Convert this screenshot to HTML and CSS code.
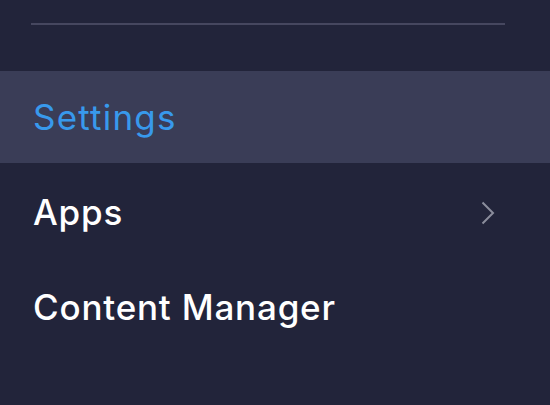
FILE: index.html
```html
<!DOCTYPE html>
<html>
<head>
<meta charset="utf-8">
<link rel="stylesheet" href="styles.css">
</head>
<body>
<nav class="menu">
  <div class="divider-wrap"><div class="divider"></div></div>
  <ul class="items">
    <li class="item active"><span class="label">Settings</span></li>
    <li class="item"><span class="label">Apps</span>
      <svg class="chev" width="14" height="24" viewBox="0 0 14 24"><path d="M1.5 1.5 L12 12 L1.5 22.5" fill="none" stroke="#8b8d9c" stroke-width="2"/></svg>
    </li>
    <li class="item"><span class="label">Content Manager</span></li>
  </ul>
</nav>
</body>
</html>
```
FILE: styles.css
```css
html, body {
  margin: 0;
  padding: 0;
  width: 550px;
  height: 405px;
  background: #22243a;
  overflow: hidden;
}
.menu {
  font-family: Inter, "Noto Sans", sans-serif;
}
.divider-wrap {
  padding: 23px 45px 0 31px;
  height: 71px;
  box-sizing: border-box;
}
.divider {
  height: 2px;
  background: #46475f;
}
.items {
  list-style: none;
  margin: 0;
  padding: 0;
}
.item {
  height: 95px;
  box-sizing: border-box;
  padding: 4px 55px 0 33px;
  display: flex;
  align-items: center;
  justify-content: space-between;
  color: #ffffff;
  font-size: 35px;
  font-weight: 500;
  letter-spacing: 0.8px;
}
.item.active {
  height: 92px;
  padding-top: 0;
  background: #3a3d57;
  color: #3899ec;
  font-weight: 400;
  letter-spacing: 1.2px;
}
.label {
  line-height: 1;
}
.chev {
  display: block;
}
```
